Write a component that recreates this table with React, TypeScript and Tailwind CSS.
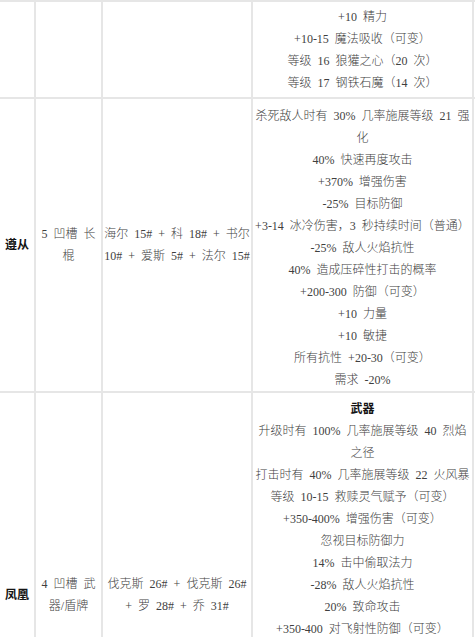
import React from 'react';

type Line = { text: string; bold?: boolean };

interface RowProps {
    name?: string;
    slots?: string[];
    runes?: string[];
    stats: Line[];
    top?: boolean;
    statsPad: string;
    className?: string;
}

const font = {
    fontFamily: '"Liberation Serif", "Noto Sans CJK SC", serif',
    wordSpacing: '3px'
};

const Lines: React.FC<{ lines: string[] }> = ({ lines }) => (
    <div className="flex flex-col items-center">
        {lines.map((l, i) => (
            <div key={i} className="whitespace-nowrap">
                {l}
            </div>
        ))}
    </div>
);

const Row: React.FC<RowProps> = ({ name, slots = [], runes = [], stats, top, statsPad, className = '' }) => (
    <div
        className={`grid grid-cols-[36px_67px_150px_221px] border-b-2 border-[#e6e6e6] ${top ? 'border-t-2' : ''} ${className}`}
    >
        <div className="flex items-center justify-center border-r-2 border-[#e6e6e6] font-bold text-[#141414]">
            {name}
        </div>
        <div className="flex items-center justify-center border-r-2 border-[#e6e6e6]">
            <Lines lines={slots} />
        </div>
        <div className="flex items-center justify-center border-r-2 border-[#e6e6e6]">
            <Lines lines={runes} />
        </div>
        <div className={`flex flex-col items-center border-r-2 border-[#e6e6e6] ${statsPad}`}>
            {stats.map((s, i) => (
                <div key={i} className={`whitespace-nowrap ${s.bold ? 'font-bold text-[#141414]' : ''}`}>
                    {s.text}
                </div>
            ))}
        </div>
    </div>
);

const l = (arr: string[]): Line[] => arr.map(text => ({ text }));

export default function App() {
    return (
        <div
            className="h-screen bg-white text-[12px] leading-[22px] font-light text-[#3f3f3f] overflow-hidden"
            style={font}
        >
            <Row
                top
                statsPad="pt-[4px] pb-[3px]"
                stats={l(['+10 精力', '+10-15 魔法吸收（可变）', '等级 16 狼獾之心（20 次）', '等级 17 钢铁石魔（14 次）'])}
            />
            <Row
                name="遵从"
                slots={['5 凹槽 长', '棍']}
                runes={['海尔 15# + 科 18# + 书尔', '10# + 爱斯 5# + 法尔 15#']}
                statsPad="pt-[6px]"
                stats={l([
                    '杀死敌人时有 30% 几率施展等级 21 强',
                    '化',
                    '40% 快速再度攻击',
                    '+370% 增强伤害',
                    '-25% 目标防御',
                    '+3-14 冰冷伤害，3 秒持续时间（普通）',
                    '-25% 敌人火焰抗性',
                    '40% 造成压碎性打击的概率',
                    '+200-300 防御（可变）',
                    '+10 力量',
                    '+10 敏捷',
                    '所有抗性 +20-30（可变）',
                    '需求 -20%'
                ])}
            />
            <Row
                name="凤凰"
                className="min-h-[406px]"
                slots={['4 凹槽 武', '器/盾牌']}
                runes={['伐克斯 26# + 伐克斯 26#', '+ 罗 28# + 乔 31#']}
                statsPad="pt-[5px]"
                stats={[
                    { text: '武器', bold: true },
                    ...l([
                        '升级时有 100% 几率施展等级 40 烈焰',
                        '之径',
                        '打击时有 40% 几率施展等级 22 火风暴',
                        '等级 10-15 救赎灵气赋予（可变）',
                        '+350-400% 增强伤害（可变）',
                        '忽视目标防御力',
                        '14% 击中偷取法力',
                        '-28% 敌人火焰抗性',
                        '20% 致命攻击',
                        '+350-400 对飞射性防御（可变）'
                    ])
                ]}
            />
        </div>
    );
}
